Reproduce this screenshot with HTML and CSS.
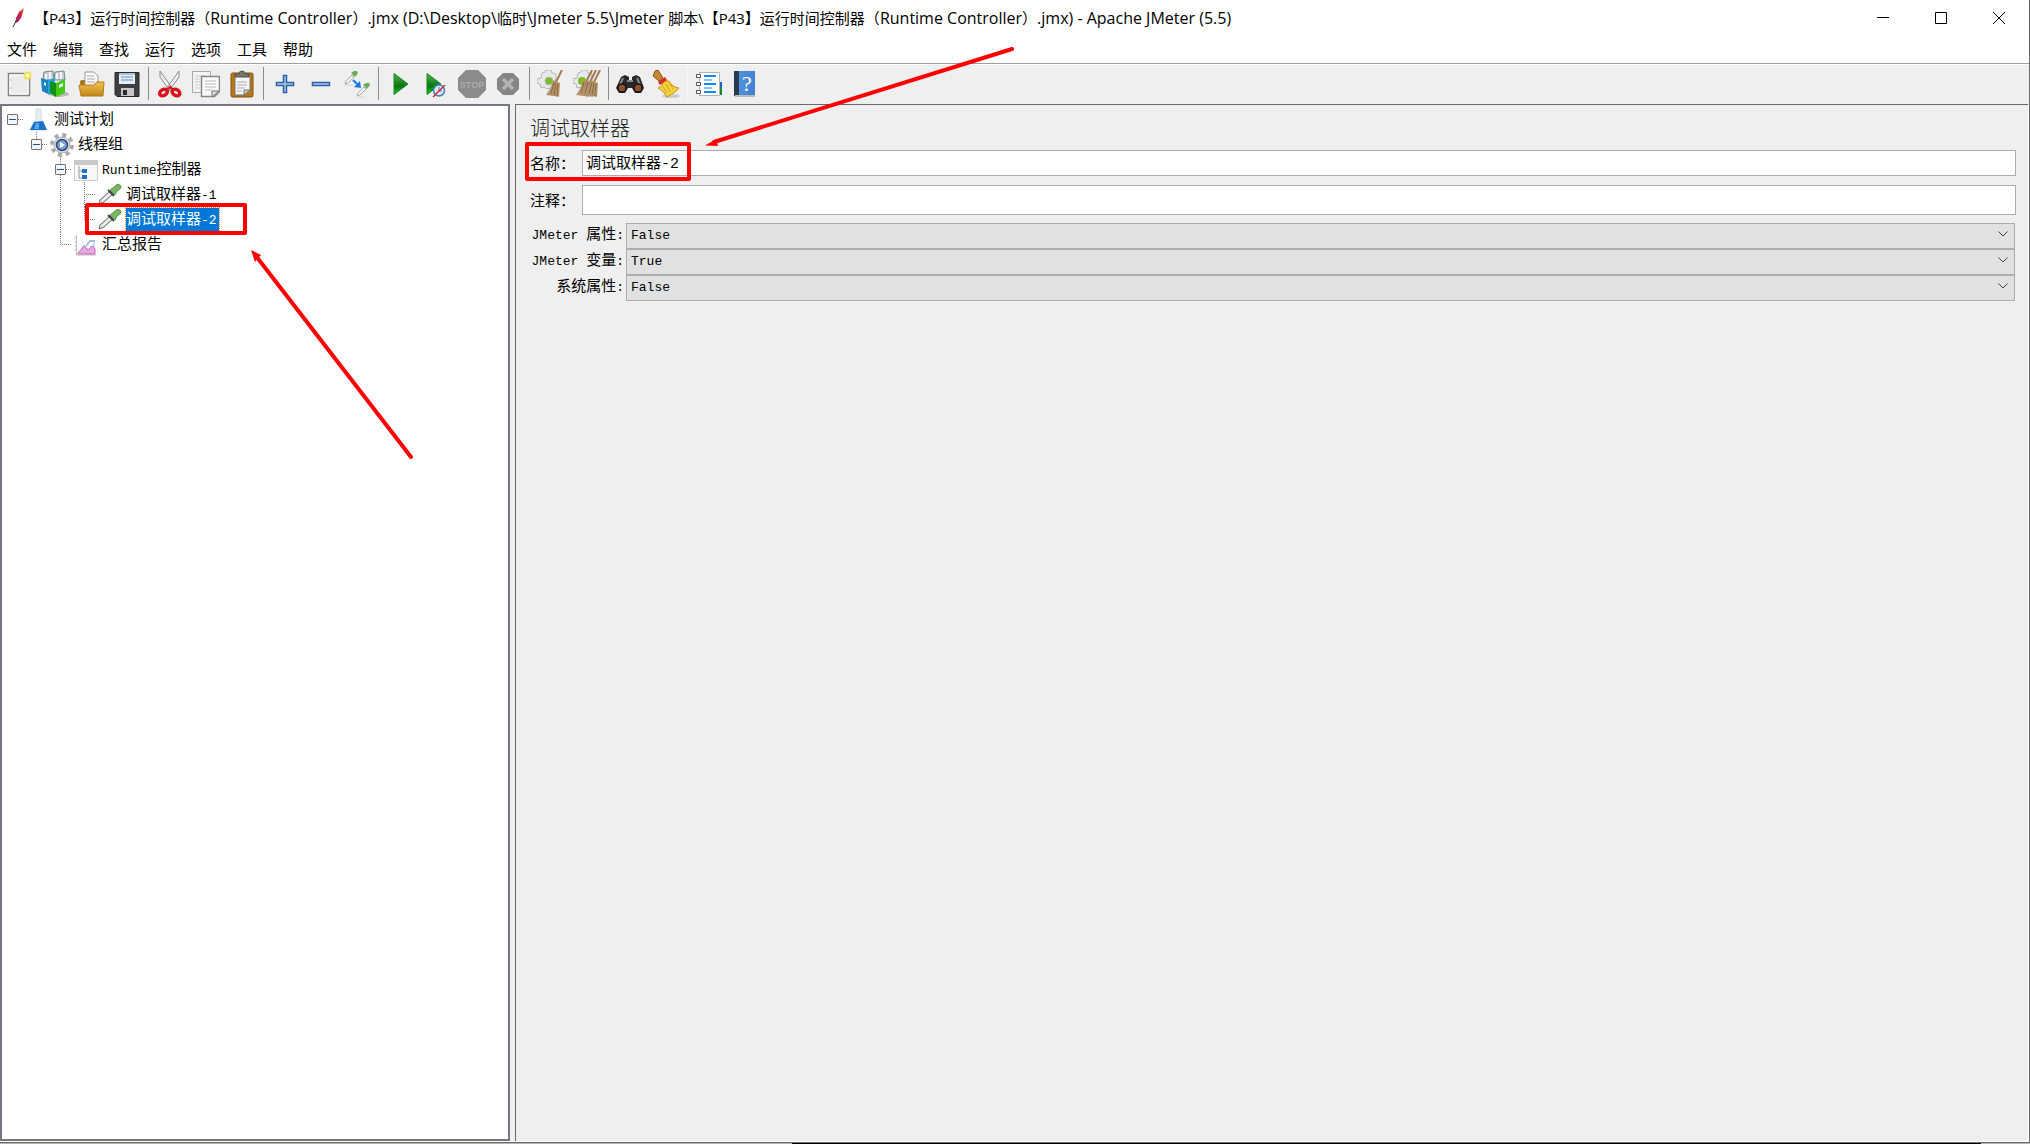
FILE: index.html
```html
<!DOCTYPE html>
<html lang="zh-CN">
<head>
<meta charset="utf-8">
<title>Apache JMeter (5.5)</title>
<link rel="stylesheet" href="styles.css">
</head>
<body>
<div class="window">
  <header class="titlebar">
    <svg class="feather" width="14" height="20" viewBox="0 0 14 20"><defs><linearGradient id="fe" x1="1" y1="0" x2="0" y2="1"><stop offset="0" stop-color="#f69923"/><stop offset=".35" stop-color="#d8203c"/><stop offset="1" stop-color="#8a2a7c"/></linearGradient></defs><path d="M12 0 7 4 4 10 3 15 6 14 9 10 11 4z" fill="url(#fe)"/><path d="M4 13 1 19" stroke="#4a2a50"/></svg>
    <h1 class="caption">【P43】运行时间控制器（<span class="caption-latin">Runtime Controller</span>）<span class="caption-latin">.jmx (D:\Desktop\</span>临时<span class="caption-latin">\Jmeter 5.5\Jmeter </span>脚本\【P43】运行时间控制器（<span class="caption-latin">Runtime Controller</span>）<span class="caption-latin">.jmx) - Apache JMeter (5.5)</span></h1>
    <div class="controls">
      <button class="control" aria-label="最小化"><svg width="12" height="12"><path d="M0 5.5h12" stroke="#000"/></svg></button>
      <button class="control" aria-label="最大化"><svg width="12" height="12"><path d="M.5.5h11v11H.5z" fill="none" stroke="#000"/></svg></button>
      <button class="control" aria-label="关闭"><svg width="12" height="12"><path d="M0 0 12 12M12 0 0 12" stroke="#000"/></svg></button>
    </div>
  </header>
  <nav class="menubar">
    <button class="menu">文件</button><button class="menu">编辑</button><button class="menu">查找</button><button class="menu">运行</button><button class="menu">选项</button><button class="menu">工具</button><button class="menu">帮助</button>
  </nav>
  <div class="toolbar">
    <button class="tool" aria-label="新建"><svg width="28" height="28" viewBox="0 0 28 28"><path d="M3.5 3.500h21v22h-21z" fill="#f1f1f1" stroke="#85857f" stroke-width="1.500"/><path d="M5 5h18v19H5z" fill="#ececec" stroke="#fff"/><path d="M6 9v2M6 17v2" stroke="#bbb"/><circle cx="22.500" cy="5.500" r="3" fill="#fffbd5" stroke="#f3de54" stroke-width="2"/></svg></button>
    <button class="tool" aria-label="模板"><svg width="28" height="28" viewBox="0 0 28 28"><ellipse cx="18" cy="24" rx="10" ry="3" fill="#bbb"/><path d="M3 2 12 1 13 10 2 10zM14 2l9-1 1 9H13z" fill="#c5cfd2" stroke="#77888c"/><path d="M5 4v6M9 2v7M16 3v6M20 2v7" stroke="#f5f5f5" stroke-width="2"/><path d="M0 8 7 10v14l-6-3z" fill="#1182c4"/><path d="m7 10 7-2v14l-7 3z" fill="#20a3e6"/><path d="m3 12 2 1v3l-2-1z" fill="#fff"/><path d="m9 11 6 2v14l-6-4z" fill="#158e13"/><path d="m15 13 9-4v14l-9 4z" fill="#42c817"/><path d="m18 15 4-2v3l-4 2z" fill="#fff"/></svg></button>
    <button class="tool" aria-label="打开"><svg width="28" height="28" viewBox="0 0 28 28"><defs><linearGradient id="fo" x2="0" y2="1"><stop stop-color="#f2c24e"/><stop offset="1" stop-color="#c1851a"/></linearGradient></defs><path d="M3 12q0-2 2-2h4l2 2h14l1 3v9H4z" fill="#a97519"/><path d="M8 2h9l4 4v10H8z" fill="#fafafa" stroke="#999"/><path d="M10 6h7M10 9h8M10 12h8" stroke="#aaa"/><path d="M2 15h15l3-3h7l-1 14H4z" fill="url(#fo)" stroke="#b27c1d"/></svg></button>
    <button class="tool" aria-label="保存"><svg width="28" height="28" viewBox="0 0 28 28"><path d="M2 2.500h24v24H4l-2-2z" fill="#3f3f43" stroke="#28282b"/><path d="M6 3h16v11H6z" fill="#e6eef8"/><path d="M6 4h16" stroke="#6e95c7"/><path d="M8 7h12M8 10h12" stroke="#8faed3" stroke-width="1.500"/><path d="M8 18h13v8H8z" fill="#c6c6c8"/><path d="M10 20h4v5h-4z" fill="#2a2a2d"/></svg></button>
    <span class="separator"></span>
    <button class="tool" aria-label="剪切"><svg width="28" height="28" viewBox="0 0 28 28"><path d="m4 1 13 18-3 2L4 7zM23 1 10 19l3 2L23 7z" fill="#eee" stroke="#8a8a8a"/><g fill="#eee" stroke="#d9131b" stroke-width="3.500"><ellipse cx="7.500" cy="22.500" rx="4" ry="3" transform="rotate(-30 7.500 22.500)"/><ellipse cx="20" cy="22.500" rx="4" ry="3" transform="rotate(30 20 22.500)"/></g><path d="m11 20 3-3 3 3" fill="none" stroke="#d9131b" stroke-width="2"/></svg></button>
    <button class="tool" aria-label="复制"><svg width="28" height="28" viewBox="0 0 28 28"><path d="M.5 1.500h18v21H.5z" fill="#f3f3f3" stroke="#a9a9a9"/><path d="M3 6h12M3 9h5M3 12h5M3 15h5M3 18h5" stroke="#ccc"/><path d="M9.500 6.500h18v15l-5 5h-13z" fill="#fafafa" stroke="#868686" stroke-width="1.500"/><path d="M13 11h11M13 14h11M13 17h11M13 20h7" stroke="#bbb"/><path d="M20 27v-6h7z" fill="#ddd" stroke="#777"/></svg></button>
    <button class="tool" aria-label="粘贴"><svg width="28" height="28" viewBox="0 0 28 28"><rect x="3" y="3" width="22" height="24" rx="1.500" fill="#b87617" stroke="#85500c"/><path d="M7 6h15v14l-5 5H7z" fill="#f6f6f6" stroke="#777"/><path d="M9 12h10M9 15h10M9 18h8M9 21h5" stroke="#aaa"/><path d="M16 25v-5h6z" fill="#ccc" stroke="#777"/><path d="M7 7V4h4q0-3 3-3t3 3h4v3z" fill="#777970" stroke="#505249"/></svg></button>
    <span class="separator"></span>
    <button class="tool" aria-label="展开"><svg width="28" height="28" viewBox="0 0 28 28"><path d="M12.500 5.500h3v7h7v3h-7v7h-3v-7h-7v-3h7z" fill="#a9c8ea" stroke="#2d62a6" stroke-width="1.500"/></svg></button>
    <button class="tool" aria-label="折叠"><svg width="28" height="28" viewBox="0 0 28 28"><path d="M5.500 12.500h17v3h-17z" fill="#a9c8ea" stroke="#2d62a6" stroke-width="1.500"/></svg></button>
    <button class="tool" aria-label="切换"><svg width="28" height="28" viewBox="0 0 28 28"><path d="M2 15h8M14 27h8" stroke="#d5d5d5"/><g id="pip"><path d="m2 14 1-3 6-6 2 2-6 6z" fill="#f5f5f5" stroke="#aaa"/><path d="m8 3 4 4 3-4-1-2-3 0z" fill="#6dab58"/></g><use href="#pip" x="12" y="12"/><path d="m10 10 6 6" stroke="#1e78e8" stroke-width="2"/><path d="m17 11 1 7-7-1z" fill="#1e78e8"/></svg></button>
    <span class="separator"></span>
    <button class="tool" aria-label="启动"><svg width="28" height="28" viewBox="0 0 28 28"><defs><linearGradient id="gr" x2="0" y2="1"><stop stop-color="#53b84d"/><stop offset=".5" stop-color="#14801b"/><stop offset=".6" stop-color="#0a7210"/><stop offset="1" stop-color="#1bd421"/></linearGradient></defs><path d="M8 3.500v21L22 14z" fill="url(#gr)" stroke="#1c8422"/></svg></button>
    <button class="tool" aria-label="不停顿启动"><svg width="28" height="28" viewBox="0 0 28 28"><path d="M5 3.500v21L19 14z" fill="url(#gr)" stroke="#1c8422"/><circle cx="17" cy="20.500" r="5.500" fill="#dbe8f5" stroke="#4780bb" stroke-width="1.500"/><path d="M17 17v4h3" fill="none" stroke="#4780bb"/><path d="m11 27 12-12" stroke="#dd2630" stroke-width="1.500"/></svg></button>
    <button class="tool" aria-label="停止" disabled><svg width="28" height="28" viewBox="0 0 28 28"><path d="M8 0h12l8 8v12l-8 8H8l-8-8V8z" fill="#8b8b8b"/><text class="stop-text" x="14" y="18" text-anchor="middle">STOP</text></svg></button>
    <button class="tool" aria-label="关闭线程" disabled><svg width="28" height="28" viewBox="0 0 28 28"><path d="M9 3h10l6 6v10l-6 6H9l-6-6V9z" fill="#858585"/><path d="m9 9 10 10M19 9 9 19" stroke="#b3b3b3" stroke-width="3.500"/></svg></button>
    <span class="separator"></span>
    <button class="tool" aria-label="清除"><svg width="28" height="28" viewBox="0 0 28 28"><g id="gear"><path d="m5 3 3-1 1-2h5l1 3 4 1-1 13-8 2-3-2-3 1-1-4-3-1V9l4-1z" fill="#e7e9e9" stroke="#b4b8b8"/></g><circle cx="12" cy="11" r="4" fill="#78bd26" stroke="#b4b8b8"/><g id="brush"><path d="m25 0-6 12" stroke="#a47a50" stroke-width="2"/><path d="m16 10 7 3-1 14-5-1-8-1q6-8 7-15z" fill="#b5946b"/><path d="m17 12-3 12M19 13l-2 12M21 14l-1 12" stroke="#8b6740"/></g></svg></button>
    <button class="tool" aria-label="清除全部"><svg width="28" height="28" viewBox="0 0 28 28"><use href="#gear"/><circle cx="9" cy="11" r="4" fill="#78bd26"/><use href="#brush" x="-6"/><use href="#brush" x="-2"/><use href="#brush" x="2"/></svg></button>
    <span class="separator"></span>
    <button class="tool" aria-label="查找"><svg width="28" height="28" viewBox="0 0 28 28"><path d="m5 7 4-2 4 2v4h3V7l4-2 4 2 4 11-3 5h-6l-3-5h-4l-3 5H3l-3-5z" fill="#292929"/><path d="m7 8-3 7M21 8l3 7" stroke="#888" stroke-width="2"/><circle cx="6" cy="18" r="4" fill="#8d5031" stroke="#111" stroke-width="1.500"/><circle cx="22" cy="18" r="4" fill="#8d5031" stroke="#111" stroke-width="1.500"/><path d="M11 11h6" stroke="#888" stroke-width="2"/></svg></button>
    <button class="tool" aria-label="重置查找"><svg width="28" height="28" viewBox="0 0 28 28"><ellipse cx="19" cy="26" rx="9" ry="2" fill="#ccc"/><path d="M3 1 6 0l5 8-4 3-6-5z" fill="#c58634" stroke="#8c5a17"/><path d="m11 11 6 0q3 6 10 7-4 5-12 9-3-6-9-9 5-2 5-7z" fill="#f5d13d" stroke="#c29513"/><path d="m14 14 4 8M11 17l4 6M18 13l3 6" stroke="#c99d1c"/><path d="m6 12 7-5 2 3-7 5z" fill="#d72b1c"/></svg></button>
    <span class="separator separator-faint"></span>
    <button class="tool" aria-label="函数助手"><svg width="28" height="28" viewBox="0 0 28 28"><path d="M25 12h2v6h-2z" fill="#1467c7"/><path d="M25 18h2v7h-2z" fill="#15892a"/><path d="M4.500 2.500h20v23h-20z" fill="#fff" stroke="#b2b2b2"/><g fill="#fff" stroke="#555"><path d="M1.500 4.500h4v3h-4zM1.500 12.500h4v3h-4zM1.500 20.500h4v3h-4z"/></g><path d="M9 6h12M9 14h12M9 22h12" stroke="#1685fa" stroke-width="2"/><path d="M9 10h8M9 18h8" stroke="#1685fa"/></svg></button>
    <button class="tool" aria-label="帮助"><svg width="28" height="28" viewBox="0 0 28 28"><defs><linearGradient id="bk"><stop stop-color="#5c97de"/><stop offset="1" stop-color="#3d80d2"/></linearGradient></defs><path d="M3 1h21v25H3z" fill="url(#bk)"/><path d="M3 1h5v25H3z" fill="#293b50"/><path d="M4 26h20" stroke="#bbb" stroke-width="2"/><text class="help-text" x="16" y="21" text-anchor="middle">?</text></svg></button>
  </div>

  <main class="workspace">
    <section class="tree-pane">
      <ul class="tree">
        <li class="node">
          <div class="row"><button class="toggle" aria-label="折叠"></button>
            <svg class="node-icon" width="24" height="24" viewBox="0 0 24 24"><path d="M10 1h5v9l5 12H4l6-12z" fill="#e7edf0" stroke="#d3dade"/><path d="m8 14 9-1 4 9H4z" fill="#176fc6"/><path d="m10 15 3 0v6H8z" fill="#55a9ee"/></svg>
            <span class="label">测试计划</span></div>
          <ul class="branch">
            <li class="node">
              <div class="row"><button class="toggle" aria-label="折叠"></button>
                <svg class="node-icon" width="24" height="24" viewBox="0 0 24 24"><circle cx="12" cy="12" r="10" fill="none" stroke="#aaa" stroke-width="4" stroke-dasharray="4 3.850"/><circle cx="12" cy="12" r="8" fill="#e1e1e1" stroke="#b0b0b0"/><circle cx="12" cy="12" r="5.500" fill="#7c9fcd" stroke="#284978" stroke-width="1.500"/><path d="m10 9 5 3-5 3z" fill="#fff"/></svg>
                <span class="label">线程组</span></div>
              <ul class="branch">
                <li class="node">
                  <div class="row"><button class="toggle" aria-label="折叠"></button>
                    <svg class="node-icon" width="24" height="24" viewBox="0 0 24 24"><path d="M.5 2.500h23v20H.5z" fill="#f8f8f8" stroke="#ccc"/><path d="M0 2h24v5H0z" fill="#c9c9cc"/><path d="M5 8v12h3M5 13h3" fill="none" stroke="#999"/><path d="M8 11h5v4H8zM8 17h5v4H8z" fill="#2272c3"/></svg>
                    <span class="label"><span class="latin">Runtime</span>控制器</span></div>
                  <ul class="branch">
                    <li class="node"><div class="row leaf">
                      <svg class="node-icon" width="24" height="24" viewBox="0 0 24 24"><g id="dropper"><path d="m1 21 1-4 10-9 3 3-9 8z" fill="#ddd" stroke="#666"/><path d="m4 18 9-8" stroke="#fff"/><path d="m10 7 6 6" stroke="#444" stroke-width="2"/><path d="m12 7 5 5 2-4q6-3 3-6-3-2-6 2z" fill="#7ab562" stroke="#5a9a4c"/></g></svg>
                      <span class="label">调试取样器<span class="latin">-1</span></span></div></li>
                    <li class="node"><div class="row leaf">
                      <svg class="node-icon" width="24" height="24" viewBox="0 0 24 24"><use href="#dropper"/></svg>
                      <span class="label selected">调试取样器<span class="latin">-2</span></span></div></li>
                  </ul>
                </li>
                <li class="node"><div class="row leaf">
                  <svg class="node-icon" width="24" height="24" viewBox="0 0 24 24"><path d="M2.500 2v20H22" fill="none" stroke="#bbb"/><path d="M0 5h2M0 9h2M0 13h2M0 17h2" stroke="#ccc"/><path d="m4 20 6-9 5 5 6-9v14H4z" fill="#c9e0f8"/><path d="m4 20 6-7 4 4 4-4 3 3v5H4z" fill="#e9a7df" stroke="#cb69ba"/><path d="m12 13 4-5h5" fill="none" stroke="#a5bcd8" stroke-width="2"/></svg>
                  <span class="label">汇总报告</span></div></li>
              </ul>
            </li>
          </ul>
        </li>
      </ul>
    </section>
    <section class="editor">
      <h2 class="editor-title">调试取样器</h2>
      <div class="field"><label for="name">名称：</label><input class="text" id="name" value="调试取样器-2"></div>
      <div class="field comment"><label for="comment">注释：</label><input class="text" id="comment"></div>
      <div class="options">
        <label for="props"><span class="latin">JMeter </span>属性<span class="latin">:</span></label>
        <div class="combo"><select id="props"><option>False</option><option>True</option></select><svg width="10" height="6"><path d="M.5.5 5 5 9.500.5" fill="none" stroke="#444"/></svg></div>
        <label for="vars"><span class="latin">JMeter </span>变量<span class="latin">:</span></label>
        <div class="combo"><select id="vars"><option>True</option><option>False</option></select><svg width="10" height="6"><path d="M.5.5 5 5 9.500.5" fill="none" stroke="#444"/></svg></div>
        <label for="sys">系统属性<span class="latin">:</span></label>
        <div class="combo"><select id="sys"><option>False</option><option>True</option></select><svg width="10" height="6"><path d="M.5.5 5 5 9.500.5" fill="none" stroke="#444"/></svg></div>
      </div>
    </section>
  </main>
  <svg class="marks" width="1100" height="500" viewBox="0 0 1100 500">
    <g fill="none" stroke="#f00" stroke-width="4" stroke-linejoin="round" stroke-linecap="round"><path d="M87 205h158v28H87zM527 144h162v35H527z"/><path d="M256 256 411 457M714 142l298-93"/></g>
    <path d="m251 250 10 5-6 7zM705 145.500l11-6.500 2 7z" fill="#f00"/>
  </svg>
</div>
<footer class="desktop-strip"></footer>
</body>
</html>
```
FILE: styles.css
```css
* { box-sizing: border-box; }

body {
  margin: 0;
  height: 100vh;
  display: flex;
  flex-direction: column;
  overflow: hidden;
  background: #fff;
  color: #000;
  font: 15px/24px "Noto Sans CJK SC", sans-serif;
}

button {
  margin: 0;
  padding: 0;
  border: 0;
  background: none;
  font: inherit;
  color: inherit;
}

.window {
  position: relative;
  flex: 1;
  min-height: 0;
  display: flex;
  flex-direction: column;
  border-right: 1px solid #696969;
}

/* Title bar */
.titlebar {
  display: flex;
  align-items: center;
  height: 36px;
  padding: 0 1px 0 12px;
}
.feather { margin-right: 8px; }
.caption {
  flex: 1;
  margin: 0;
  font: 15px/24px "Open Sans", "Noto Sans CJK SC", sans-serif;
  white-space: nowrap;
}
.caption-latin { font-size: 16px; }
.controls { display: flex; }
.control {
  width: 58px;
  height: 36px;
  display: grid;
  place-items: center;
}

/* Menu bar */
.menubar {
  display: flex;
  align-items: flex-start;
  gap: 16px;
  height: 28px;
  padding: 1px 7px;
  border-bottom: 1px solid #a0a0a0;
}

/* Toolbar */
.toolbar {
  display: flex;
  align-items: center;
  height: 40px;
  padding: 0 0 2px 1px;
  border-top: 1px solid #fff;
  background: #efefef;
}
.tool {
  width: 36px;
  height: 36px;
  display: grid;
  place-items: center;
}
.separator {
  width: 1px;
  height: 33px;
  margin: 0 3px;
  background: #8c8c8c;
}
.separator-faint { background: #f7f7f7; }
.stop-text { font: bold 9px "Liberation Sans", sans-serif; fill: #aaa; }
.help-text { font: 22px "Liberation Serif", serif; fill: #fff; }

/* Work area */
.workspace {
  flex: 1;
  min-height: 0;
  display: grid;
  grid-template-columns: 510px 1fr;
  column-gap: 5px;
  padding-right: 1px;
  padding-bottom: 1px;
  background: linear-gradient(#efefef, #efefef) content-box, #fff;
}
.tree-pane {
  border: 2px solid #747880;
  background: #fff;
}

/* Tree */
.tree, .branch {
  margin: 0;
  padding: 0;
  list-style: none;
}
.tree { padding: 1px 0 0 5px; }
.branch { padding-left: 24px; }
.node { position: relative; }
.branch > .node::before {
  content: "";
  position: absolute;
  left: 5px;
  top: 0;
  height: 13px;
  border-left: 1px dotted #808080;
}
.branch > .node:not(:last-child)::before { height: 100%; }
.row {
  position: relative;
  display: flex;
  align-items: center;
  height: 25px;
}
.row::before {
  content: "";
  position: absolute;
  left: 5px;
  top: 12px;
  width: 11px;
  border-top: 1px dotted #808080;
}
.leaf { padding-left: 11px; }
.toggle {
  position: relative;
  width: 11px;
  height: 11px;
  border: 1px solid #707070;
  border-radius: 1px;
  background: linear-gradient(#1f4fa5, #1f4fa5) center / 7px 1px no-repeat #f6f6f6;
}
.node-icon { margin: 0 4px 0 8px; }
.label {
  height: 24px;
  line-height: 20px;
  white-space: nowrap;
}
.latin { font: 13px "Liberation Mono", monospace; white-space: pre; }
.selected {
  padding-right: 2px;
  background: #0078d7;
  color: #fff;
  outline: 1px dotted #ff8728;
}

/* Editor */
.editor {
  padding: 8px 12px 0 14px;
  border-top: 1px solid #696969;
  border-left: 1px solid #696969;
}
.editor-title {
  margin: 0 0 7px;
  color: #222;
  font-size: 20px;
  font-weight: 300;
  line-height: 30px;
}
.field {
  display: grid;
  grid-template-columns: 52px 1fr;
  align-items: center;
  height: 26px;
}
.comment { height: 30px; margin: 9px 0 6px; }
.text {
  width: 100%;
  height: 100%;
  padding: 0 3px 2px;
  border: 1px solid #abadb3;
  background: #fff;
  font: 15px "Liberation Mono", "Noto Sans CJK SC", monospace;
}
.options {
  display: grid;
  grid-template-columns: 94px 1fr;
  grid-auto-rows: 26px;
  column-gap: 2px;
  padding-right: 1px;
}
.options label { text-align: right; white-space: nowrap; }
.combo { position: relative; }
.combo select {
  width: 100%;
  height: 100%;
  padding: 0 4px;
  appearance: none;
  border: 1px solid #adadad;
  border-radius: 0;
  background: #e1e1e1;
  color: #000;
  font: 13px "Liberation Mono", monospace;
}
.combo svg {
  position: absolute;
  right: 7px;
  top: 10px;
  pointer-events: none;
}

/* Red callouts drawn over the window */
.marks {
  position: absolute;
  left: 0;
  top: 0;
  pointer-events: none;
}

.desktop-strip {
  height: 2px;
  border-top: 1px solid #696969;
  background: linear-gradient(90deg, #b5b5b5 39%, #000 39%, #000 97.6%, #b5b5b5 97.6%);
}
```
